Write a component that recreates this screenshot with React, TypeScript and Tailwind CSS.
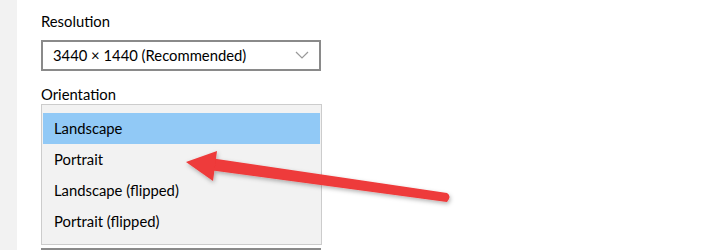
import React from "react";

const items = ["Landscape", "Portrait", "Landscape (flipped)", "Portrait (flipped)"];

function Arrow() {
  return (
    <svg className="absolute left-0 top-0 pointer-events-none" width="720" height="250" viewBox="0 0 720 250">
      <defs>
        <filter id="sh" x="-10%" y="-30%" width="120%" height="160%">
          <feDropShadow dx="1" dy="2" stdDeviation="2" floodColor="#000" floodOpacity="0.3" />
        </filter>
      </defs>
      <g filter="url(#sh)" fill="#ee3a3a">
        <path d="M210 158 L447 193 Q452 196 447 202 L209 170 Z" />
        <path d="M186 162 L217 151 L213 181 Z" />
      </g>
    </svg>
  );
}

export default function App() {
  return (
    <div className="relative flex w-[720px] h-[250px] overflow-hidden bg-white font-['Lato',sans-serif] text-black">
      <div className="w-[17px] h-full bg-[#f2f2f2]" />
      <div className="flex flex-col pl-[24px] pt-[11px]">
        <div className="text-[14.8px] leading-[20px] text-black">Resolution</div>
        <div className="mt-[9px] flex items-center justify-between w-[280px] h-[31px] border-2 border-[#8a8a8a] pl-[10px] pr-[10px]">
          <span className="text-[14.8px] text-black">3440 × 1440 (Recommended)</span>
          <svg width="14" height="8" viewBox="0 0 14 8" fill="none" stroke="#999" strokeWidth="1.2">
            <path d="M1 1 L7 7 L13 1" />
          </svg>
        </div>
        <div className="mt-[13px] text-[14.8px] leading-[20px] text-black">Orientation</div>
        <div className="flex flex-col w-[281px] h-[142px] border border-[#cccccc] bg-[#f2f2f2] pt-[8px] px-[1px]">
          {items.map((it, i) => (
            <div
              key={it}
              className={`h-[31px] flex items-center pl-[11px] text-[14.8px] text-black ${i === 0 ? "bg-[#91c9f6]" : ""}`}
            >
              {it}
            </div>
          ))}
        </div>
        <div className="w-[280px] h-[2px] bg-[#8a8a8a] mt-[3px]" />
      </div>
      <Arrow />
    </div>
  );
}
